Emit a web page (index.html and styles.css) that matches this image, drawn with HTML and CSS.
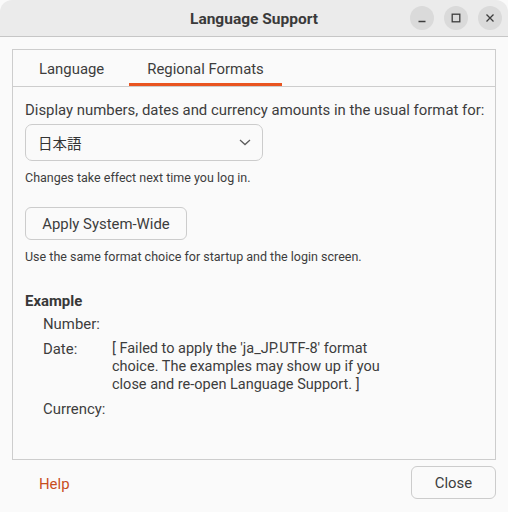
FILE: index.html
```html
<!DOCTYPE html>
<html lang="en">
<head>
<meta charset="utf-8">
<title>Language Support</title>
<link rel="stylesheet" href="styles.css">
</head>
<body>
<div class="window">
  <header class="titlebar">
    <div class="tb-side"></div>
    <div class="title">Language Support</div>
    <div class="tb-side controls">
      <span class="ctl"><svg width="10" height="10" viewBox="0 0 10 10"><path d="M1.5 8.5H8.5" stroke="#3d3d3d" stroke-width="1.3" fill="none"/></svg></span>
      <span class="ctl"><svg width="10" height="10" viewBox="0 0 10 10"><rect x="1.2" y="1.2" width="7.6" height="7.6" stroke="#3d3d3d" stroke-width="1.3" fill="none"/></svg></span>
      <span class="ctl"><svg width="10" height="10" viewBox="0 0 10 10"><path d="M1.5 1.5L8.5 8.5M8.5 1.5L1.5 8.5" stroke="#3d3d3d" stroke-width="1.3" fill="none"/></svg></span>
    </div>
  </header>
  <main class="main">
    <section class="notebook">
      <nav class="tabs">
        <div class="tab">Language</div>
        <div class="tab active">Regional Formats</div>
      </nav>
      <div class="page">
        <p class="lead">Display numbers, dates and currency amounts in the usual format for:</p>
        <div class="combo">
          <span class="combo-text">日本語</span>
          <svg class="chev" width="12" height="7" viewBox="0 0 12 7"><path d="M1 1L6 5.6L11 1" stroke="#5e5e5e" stroke-width="1.3" fill="none"/></svg>
        </div>
        <p class="hint">Changes take effect next time you log in.</p>
        <button class="btn apply">Apply System-Wide</button>
        <p class="hint">Use the same format choice for startup and the login screen.</p>
        <h3 class="ex-title">Example</h3>
        <div class="examples">
          <span class="ex-label">Number:</span><span class="ex-value"></span>
          <span class="ex-label date">Date:</span><span class="ex-value date">[ Failed to apply the 'ja_JP.UTF-8' format<br>choice. The examples may show up if you<br>close and re-open Language Support. ]</span>
          <span class="ex-label">Currency:</span><span class="ex-value"></span>
        </div>
      </div>
    </section>
    <div class="actions">
      <button class="flat help">Help</button>
      <button class="btn close">Close</button>
    </div>
  </main>
</div>
</body>
</html>
```

FILE: styles.css
```css
* { box-sizing: border-box; }
html, body { margin: 0; padding: 0; }
body {
  width: 508px;
  height: 512px;
  overflow: hidden;
  background: #fafafa;
  font-family: Roboto, "Noto Sans CJK JP", sans-serif;
  color: #3d3d3d;
  font-size: 14.9px;
}
.window {
  width: 508px;
  height: 512px;
  display: flex;
  flex-direction: column;
  background: #fafafa;
  border-radius: 12px 12px 0 0;
  overflow: hidden;
}
.titlebar {
  height: 37px;
  flex: none;
  background: #ebebeb;
  border-bottom: 1px solid #c6c6c6;
  display: grid;
  grid-template-columns: 1fr auto 1fr;
  align-items: center;
}
.title {
  font-weight: 700;
  font-size: 15.5px;
  color: #3a3a3a;
  padding-top: 1px;
}
.controls {
  display: flex;
  justify-content: flex-end;
  gap: 10px;
  padding-right: 6px;
}
.ctl {
  width: 24px;
  height: 24px;
  border-radius: 50%;
  background: #dadada;
  display: flex;
  align-items: center;
  justify-content: center;
}
.main {
  flex: 1;
  padding: 12px 12px 0 12px;
  display: flex;
  flex-direction: column;
}
.notebook {
  height: 411px;
  border: 1px solid #cdcdcd;
  display: flex;
  flex-direction: column;
}
.tabs {
  height: 37px;
  flex: none;
  border-bottom: 1px solid #cdcdcd;
  display: flex;
  padding-left: 8px;
  gap: 8px;
}
.tab {
  padding: 1px 18px 0;
  display: flex;
  align-items: center;
  font-size: 14.9px;
  color: #3d3d3d;
}
.tab:first-child {
  padding: 1px 17px 0 18px;
}
.tab.active {
  box-shadow: inset 0 -3px 0 #e95420;
}
.page {
  padding: 14px 12px 0 12px;
  display: flex;
  flex-direction: column;
  align-items: flex-start;
}
p, h3 { margin: 0; }
.lead {
  line-height: 18px;
  white-space: nowrap;
}
.combo {
  margin-top: 5px;
  width: 238px;
  height: 37px;
  border: 1px solid #cccccc;
  border-radius: 7px;
  background: #fafafa;
  display: flex;
  align-items: center;
  justify-content: space-between;
  padding: 0 11px 0 12px;
}
.combo-text {
  font-family: "Noto Sans CJK JP", sans-serif;
  font-size: 14.5px;
  color: #333;
}
.hint {
  font-size: 12.5px;
  line-height: 16px;
  margin-top: 9px;
}
.btn {
  font-family: inherit;
  font-size: 14.9px;
  color: #3d3d3d;
  background: #fafafa;
  border: 1px solid #cccccc;
  border-radius: 6px;
  height: 33px;
  padding: 1px 0 0;
}
.apply {
  margin-top: 21px;
  width: 162px;
}
.ex-title {
  margin-top: 27px;
  font-size: 14.9px;
  line-height: 18px;
  font-weight: 700;
  color: #383838;
}
.examples {
  margin-top: 5px;
  margin-left: 18px;
  display: grid;
  grid-template-columns: 69px auto;
  row-gap: 6px;
  line-height: 18px;
}
.ex-label.date, .ex-value.date {
  margin-top: 1px;
}
.ex-value {
  font-size: 14.5px;
}
.actions {
  margin-top: 6px;
  display: flex;
  justify-content: space-between;
  align-items: center;
}
.flat {
  font-family: inherit;
  font-size: 14.9px;
  background: none;
  border: none;
  padding: 2px 0 0 27px;
  height: 33px;
}
.help { color: #c84d1d; }
.close { width: 85px; padding-top: 1px; }
```
